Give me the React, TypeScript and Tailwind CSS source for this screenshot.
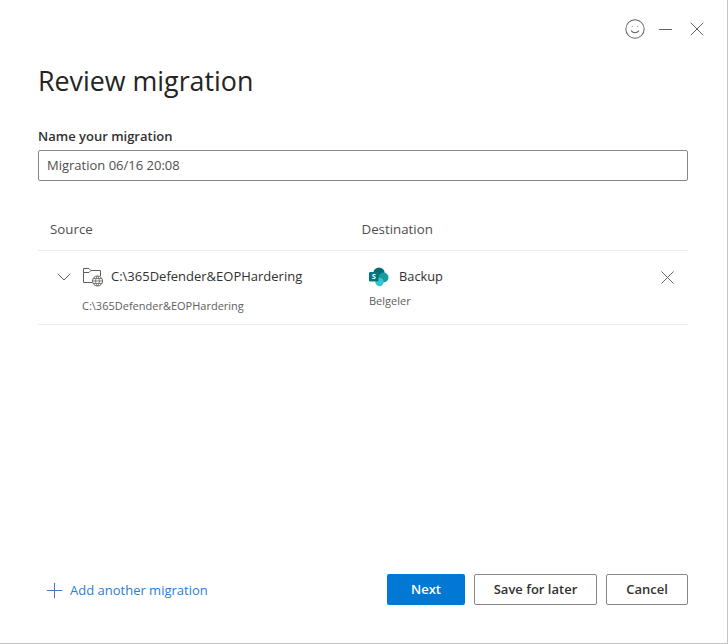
import { Plus, X, ChevronDown, Minus, Smile } from "lucide-react"

function FolderGlobe() {
  return (
    <svg width="22" height="20" viewBox="0 0 22 20" fill="none" stroke="#5f5f5f" strokeWidth="1">
      <path d="M10 15.5H1.5V1.5H7L9 3.5H18.5V9" />
      <path d="M1.5 5.5H7L9 3.5" />
      <circle cx="15.5" cy="14" r="5" />
      <path d="M10.5 14H20.5M15.5 9C13 12 13 16 15.5 19M15.5 9C18 12 18 16 15.5 19M11.3 11.5H19.7M11.3 16.5H19.7" strokeWidth="0.8" />
    </svg>
  )
}

function SharePointLogo() {
  return (
    <svg width="20" height="20" viewBox="0 0 20 20" className="-mt-[1px]">
      <circle cx="10" cy="6" r="5.6" fill="#036c70" />
      <circle cx="14.5" cy="10.5" r="5" fill="#1a9ba1" />
      <circle cx="10.5" cy="15" r="4.2" fill="#37c6d0" />
      <rect x="0" y="5" width="9.5" height="9.5" rx="1" fill="#03787c" />
      <text x="4.7" y="12.4" textAnchor="middle" fontSize="7.5" fontWeight="700" fill="#fff" fontFamily="'Open Sans', sans-serif">S</text>
    </svg>
  )
}

export default function App() {
  return (
    <div className="w-[728px] h-[644px] flex flex-col bg-white border-r border-b border-[#c4c4c4] font-['Open_Sans',sans-serif] text-[#323130]">
      <div className="flex justify-end items-center pt-[17px] pr-[15px] h-[41px] text-[#616161]">
        <span className="w-[31px] flex justify-center"><Smile size={22} strokeWidth={1.1} /></span>
        <span className="w-[31px] flex justify-center"><Minus size={21} strokeWidth={1.2} /></span>
        <span className="w-[31px] flex justify-center"><X size={24} strokeWidth={1} /></span>
      </div>

      <div className="flex flex-col flex-1 pl-[38px] pr-[39px]">
        <h1 className="mt-[22px] text-[26.8px] leading-[36px] font-medium text-[#252423]">Review migration</h1>

        <label className="mt-[28px] text-[13px] leading-[18px] font-semibold">Name your migration</label>
        <div className="mt-[5px] h-[31px] flex items-center px-2 rounded-[2px] border border-[#8a8886] text-[13px] text-[#4f4e4d]">
          Migration 06/16 20:08
        </div>

        <div className="mt-[36px] h-[34px] flex items-start border-b border-[#edebe9] text-[13.3px] leading-[24px] text-[#4f4e4d]">
          <div className="w-[323.5px] pl-3">Source</div>
          <div className="font-medium">Destination</div>
        </div>

        <div className="h-[74px] flex border-b border-[#edebe9]">
          <div className="w-[331px] flex flex-col pl-[14px] pt-[15px]">
            <div className="flex items-center h-[22px]">
              <ChevronDown size={24} strokeWidth={1} className="text-[#605e5c]" />
              <span className="ml-[6px] mr-[7px] flex"><FolderGlobe /></span>
              <span className="text-[13px]">C:\365Defender&amp;EOPHardering</span>
            </div>
            <div className="mt-[10px] ml-[30px] text-[11px] leading-[16px] text-[#605e5c]">C:\365Defender&amp;EOPHardering</div>
          </div>
          <div className="flex-1 flex flex-col pt-[15px]">
            <div className="flex items-center h-[22px]">
              <SharePointLogo />
              <span className="ml-[10px] text-[12.8px]">Backup</span>
              <X size={23} strokeWidth={1} className="ml-auto mr-[9px] text-[#605e5c]" />
            </div>
            <div className="mt-[5px] text-[11px] leading-[16px] text-[#605e5c]">Belgeler</div>
          </div>
        </div>

        <div className="mt-auto mb-[38px] flex items-center">
          <div className="flex items-center ml-[4px] pt-[2px] text-[#2b7cd3]">
            <Plus size={25} strokeWidth={1} className="text-[#4a76c0]" />
            <span className="ml-[3px] text-[13px]">Add another migration</span>
          </div>
          <div className="ml-auto flex gap-[9px] text-[13px] font-semibold">
            <button className="w-[78px] h-[31px] pt-[1px] rounded-[2px] bg-[#0078d4] text-white">Next</button>
            <button className="w-[123px] h-[31px] pt-[1px] rounded-[2px] border border-[#8a8886]">Save for later</button>
            <button className="w-[82px] h-[31px] pt-[1px] rounded-[2px] border border-[#8a8886]">Cancel</button>
          </div>
        </div>
      </div>
    </div>
  )
}
